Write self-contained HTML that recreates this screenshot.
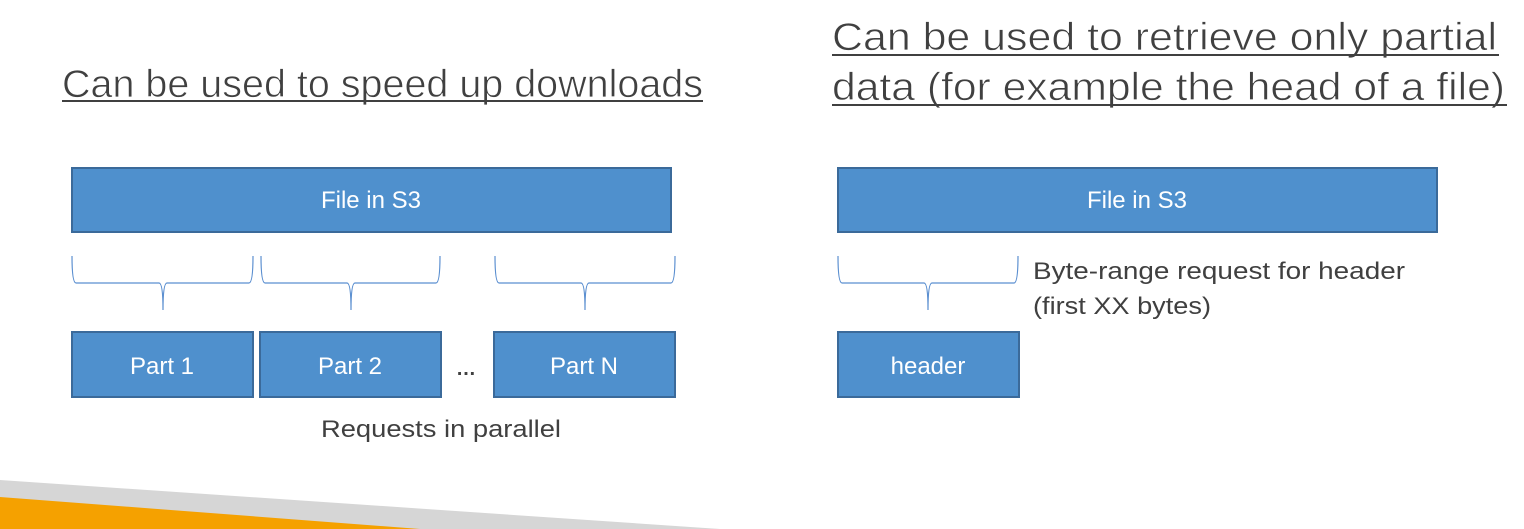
<!DOCTYPE html>
<html><head><style>html,body{margin:0;padding:0;background:#fff;}svg{display:block}</style></head>
<body>
<svg width="1524" height="529" viewBox="0 0 1524 529" xmlns="http://www.w3.org/2000/svg">
<g font-family="Liberation Sans, sans-serif" fill="#404040" stroke="#fff" stroke-width="0.7">
<text x="62" y="97" font-size="39" textLength="641" lengthAdjust="spacingAndGlyphs">Can be used to speed up downloads</text>
<text x="832" y="50" font-size="39" textLength="665" lengthAdjust="spacingAndGlyphs">Can be used to retrieve only partial</text>
<text x="832" y="100" font-size="39" textLength="673" lengthAdjust="spacingAndGlyphs">data (for example the head of a file)</text>
</g>
<g fill="#404040">
<rect x="62" y="100" width="641" height="2"/>
<rect x="832" y="54" width="667" height="2"/>
<rect x="832" y="104" width="675" height="2"/>
</g>
<g fill="#4f90cd" stroke="#3b6a9a" stroke-width="2">
<rect x="72" y="168" width="599" height="64"/>
<rect x="838" y="168" width="599" height="64"/>
<rect x="72" y="332" width="181" height="65"/>
<rect x="260" y="332" width="181" height="65"/>
<rect x="494" y="332" width="181" height="65"/>
<rect x="838" y="332" width="181" height="65"/>
</g>
<g font-family="Liberation Sans, sans-serif" fill="#fff" font-size="24" text-anchor="middle">
<text x="371" y="208">File in S3</text>
<text x="1137" y="208">File in S3</text>
<text x="162" y="374">Part 1</text>
<text x="350" y="374">Part 2</text>
<text x="584" y="374">Part N</text>
<text x="928" y="374">header</text>
</g>
<g font-family="Liberation Sans, sans-serif" fill="#404040" font-size="24">
<text x="456" y="375" font-size="20" font-weight="bold">…</text>
<text x="321" y="437" textLength="240" lengthAdjust="spacingAndGlyphs">Requests in parallel</text>
<text x="1033" y="279" textLength="372" lengthAdjust="spacingAndGlyphs">Byte-range request for header</text>
<text x="1033" y="314" textLength="178" lengthAdjust="spacingAndGlyphs">(first XX bytes)</text>
</g>
<g fill="none" stroke="#5b8fd0" stroke-width="1.2">
<path d="M72 256 Q72 283 76 283 L159 283 Q163 283 163 310 Q163 283 167 283 L249 283 Q253 283 253 256"/>
<path d="M261 256 Q261 283 265 283 L347 283 Q351 283 351 310 Q351 283 355 283 L436 283 Q440 283 440 256"/>
<path d="M495 256 Q495 283 499 283 L581 283 Q585 283 585 310 Q585 283 589 283 L671 283 Q675 283 675 256"/>
<path d="M838 256 Q838 283 842 283 L924 283 Q928 283 928 310 Q928 283 932 283 L1014 283 Q1018 283 1018 256"/>
</g>
<polygon points="0,480 720,529 0,529" fill="#d6d6d6"/>
<polygon points="0,497 420,529 0,529" fill="#f5a100"/>
</svg>
</body></html>
